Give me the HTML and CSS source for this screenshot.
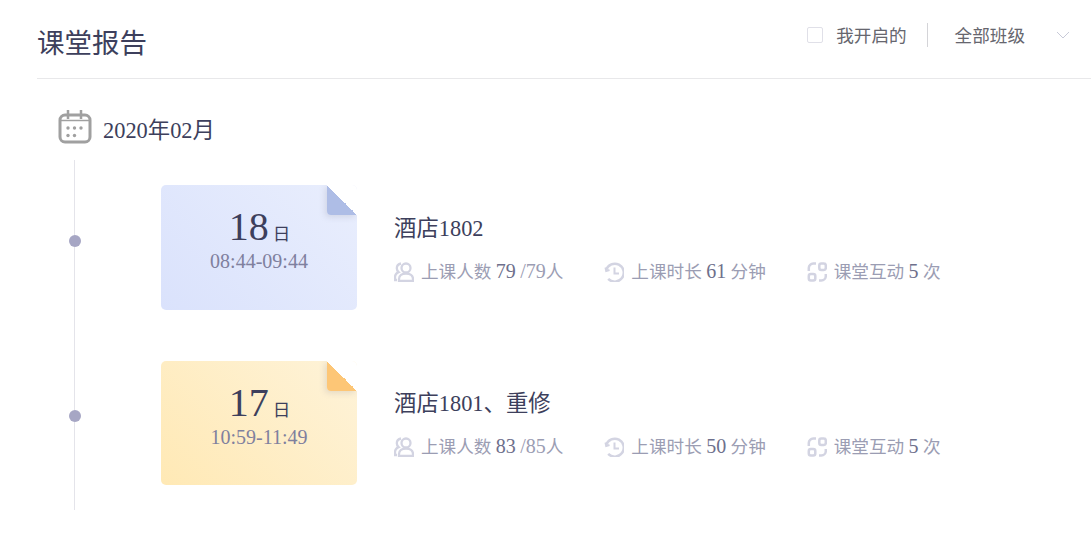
FILE: index.html

```html
<!DOCTYPE html>
<html lang="zh-CN">
<head>
    <meta charset="UTF-8">
    <meta name="viewport" content="width=device-width, initial-scale=1.0">
    <title>课堂报告</title>
    <link rel="stylesheet" href="styles.css">
</head>
<body>
    <header class="page-header">
        <h1 class="page-title">课堂报告</h1>
        <div class="filters">
            <label class="mine">
                <span class="checkbox"></span>
                <span class="filter-text">我开启的</span>
            </label>
            <span class="divider"></span>
            <div class="class-select">
                <span class="filter-text">全部班级</span>
                <svg class="chevron" width="14" height="8" viewBox="0 0 14 8"><path d="M1 1l6 6 6-6" fill="none" stroke="#c8cad8" stroke-width="1"/></svg>
            </div>
        </div>
    </header>
    <main>
        <div class="month">
            <svg class="month-icon" width="34" height="34" viewBox="0 0 34 34">
                <rect x="2" y="5" width="30" height="27" rx="5" fill="none" stroke="#a0a0a0" stroke-width="3"/>
                <path d="M3 10.500h28" stroke="#a0a0a0" stroke-width="1.500"/>
                <path d="M10 0v9M23 0v9" stroke="#a0a0a0" stroke-width="2.500"/>
                <g fill="#a0a0a0">
                    <circle cx="10" cy="18" r="1.700"/><circle cx="16.500" cy="18" r="1.700"/><circle cx="23" cy="18" r="1.700"/>
                    <circle cx="10" cy="25.500" r="1.700"/><circle cx="16.500" cy="25.500" r="1.700"/>
                </g>
            </svg>
            <span class="month-text">2020年02月</span>
        </div>
        <div class="timeline">
            <section class="lesson">
                <span class="dot"></span>
                <div class="date-card blue">
                    <span class="fold"></span>
                    <div class="day">18<small>日</small></div>
                    <div class="time">08:44-09:44</div>
                </div>
                <div class="info">
                    <h2 class="lesson-name">酒店1802</h2>
                    <div class="stats">
                        <div class="stat">
                            <svg width="20" height="20" viewBox="0 0 20 20"><use href="#i-people"/></svg>
                            <span>上课人数 <b>79</b> <i>/79</i>人</span>
                        </div>
                        <div class="stat">
                            <svg width="20" height="20" viewBox="0 0 20 20"><use href="#i-clock"/></svg>
                            <span>上课时长 <b>61</b> 分钟</span>
                        </div>
                        <div class="stat">
                            <svg width="20" height="20" viewBox="0 0 20 20"><use href="#i-act"/></svg>
                            <span>课堂互动 <b>5</b> 次</span>
                        </div>
                    </div>
                </div>
            </section>
            <section class="lesson">
                <span class="dot"></span>
                <div class="date-card yellow">
                    <span class="fold"></span>
                    <div class="day">17<small>日</small></div>
                    <div class="time">10:59-11:49</div>
                </div>
                <div class="info">
                    <h2 class="lesson-name">酒店1801、重修</h2>
                    <div class="stats">
                        <div class="stat">
                            <svg width="20" height="20" viewBox="0 0 20 20"><use href="#i-people"/></svg>
                            <span>上课人数 <b>83</b> <i>/85</i>人</span>
                        </div>
                        <div class="stat">
                            <svg width="20" height="20" viewBox="0 0 20 20"><use href="#i-clock"/></svg>
                            <span>上课时长 <b>50</b> 分钟</span>
                        </div>
                        <div class="stat">
                            <svg width="20" height="20" viewBox="0 0 20 20"><use href="#i-act"/></svg>
                            <span>课堂互动 <b>5</b> 次</span>
                        </div>
                    </div>
                </div>
            </section>
        </div>
    </main>
    <svg class="icon-defs" width="0" height="0">
        <defs>
            <g id="i-people" fill="none" stroke="#d3d4e2" stroke-width="2.300">
                <circle cx="12" cy="6" r="4.500"/>
                <path d="M5 19v-2c0-3.500 3-5.500 7-5.500s7 2 7 5.500v2z"/>
                <path d="M7 1.500C4.500 2 2.800 4 2.800 6.300c0 1.500.7 2.900 1.800 3.800C2.300 11 1 13 1 15.500V18h2"/>
            </g>
            <g id="i-clock" fill="none" stroke="#d3d4e2" stroke-width="2.500">
                <path d="M4.200 16.800A9 9 0 1 0 2.200 8"/>
                <path d="M1.500 5.500l.7 3.500 3.300-1" stroke-width="2"/>
                <path d="M10.500 5.500V11.500h4.500" stroke-width="2"/>
            </g>
            <g id="i-act" fill="none" stroke="#d3d4e2" stroke-width="2.500">
                <path d="M1.800 9V6A4.500 4.500 0 0 1 6.300 1.500H9"/>
                <rect x="12.300" y="1.500" width="6.500" height="6.500" rx="2"/>
                <rect x="1.800" y="12" width="6.500" height="6.500" rx="2"/>
                <path d="M12 18.500h2.300a4.500 4.500 0 0 0 4.500-4.500v-2"/>
            </g>
        </defs>
    </svg>
</body>
</html>
```

FILE: styles.css

```css
/* General */
body {
    margin: 0;
    background-color: #fff;
    color: #3d3f5c;
    font-family: "Liberation Serif", "Noto Sans CJK SC", serif;
    overflow: hidden;
}

.icon-defs {
    display: block;
    height: 0;
}

/* Header */
.page-header {
    display: flex;
    justify-content: space-between;
    align-items: flex-start;
    height: 78px;
    margin-left: 37px;
    border-bottom: 1px solid #e8e8ea;
}

.page-title {
    margin: 23px 0 0;
    font-size: 27.500px;
    line-height: 42px;
    font-weight: normal;
}

.filters {
    display: flex;
    align-items: center;
    height: 24px;
    margin-top: 23px;
    padding-right: 21px;
    font-size: 17.600px;
    color: #66666e;
}

.filter-text {
    padding-bottom: 2px;
}

.mine {
    display: flex;
    align-items: center;
    gap: 13px;
}

.checkbox {
    width: 14px;
    height: 14px;
    border: 1px solid #e0e0e8;
    border-radius: 2px;
}

.divider {
    width: 1px;
    height: 24px;
    margin: 0 27px 0 20px;
    background-color: #d4d4d8;
}

.class-select {
    display: flex;
    align-items: center;
    gap: 31px;
}

/* Month */
.month {
    display: flex;
    align-items: center;
    gap: 11px;
    height: 34px;
    margin: 31px 0 0 58px;
    font-size: 22.400px;
}

.month-text {
    padding-top: 2px;
}

/* Timeline */
.timeline {
    margin: 16px 0 0 74px;
    padding-top: 25px;
    height: 325px;
    border-left: 1px solid #e4e4ea;
}

.lesson {
    position: relative;
    display: flex;
    align-items: center;
    height: 125px;
    margin-bottom: 50px;
    padding-left: 86px;
}

.dot {
    position: absolute;
    left: -6px;
    top: 50px;
    width: 12px;
    height: 12px;
    border-radius: 50%;
    background-color: #a6a6c4;
}

.date-card {
    position: relative;
    flex: none;
    width: 196px;
    height: 100%;
    border-radius: 5px;
    overflow: hidden;
    text-align: center;
}

.date-card.blue {
    background: linear-gradient(45deg, #dae2fc, #e9eefd);
}

.date-card.yellow {
    height: 124px;
    margin-top: 1px;
    background: linear-gradient(45deg, #ffe9b5, #fef3d9);
}

.fold {
    position: absolute;
    top: 0;
    right: 0;
    width: 30px;
    height: 30px;
    border-bottom-left-radius: 4px;
    box-shadow: -2px 2px 6px rgba(120, 120, 140, 0.2);
}

.blue .fold {
    background: linear-gradient(to top right, #aebde6 50%, #fff 50%);
}

.yellow .fold {
    background: linear-gradient(to top right, #fdc676 50%, #fff 50%);
}

.day {
    margin-top: 19px;
    padding-left: 1px;
    font-size: 40px;
    line-height: 45px;
}

.day small {
    margin-left: 4px;
    font-size: 17.600px;
    line-height: 1;
}

.time {
    font-size: 20px;
    line-height: 24px;
    color: #7f809e;
}

/* Lesson info */
.info {
    margin-left: 37px;
    padding-top: 3px;
}

.lesson-name {
    margin: 0 0 13px;
    font-size: 22.400px;
    line-height: 32px;
    font-weight: normal;
}

.stats {
    display: flex;
    gap: 41px;
    font-size: 17.600px;
    line-height: 26px;
    color: #9b9db3;
}

.stat {
    display: flex;
    align-items: center;
    gap: 7px;
}

.stat b {
    font-size: 20px;
    font-weight: normal;
    color: #6e708c;
}

.stat i {
    font-size: 20px;
    font-style: normal;
}
```
